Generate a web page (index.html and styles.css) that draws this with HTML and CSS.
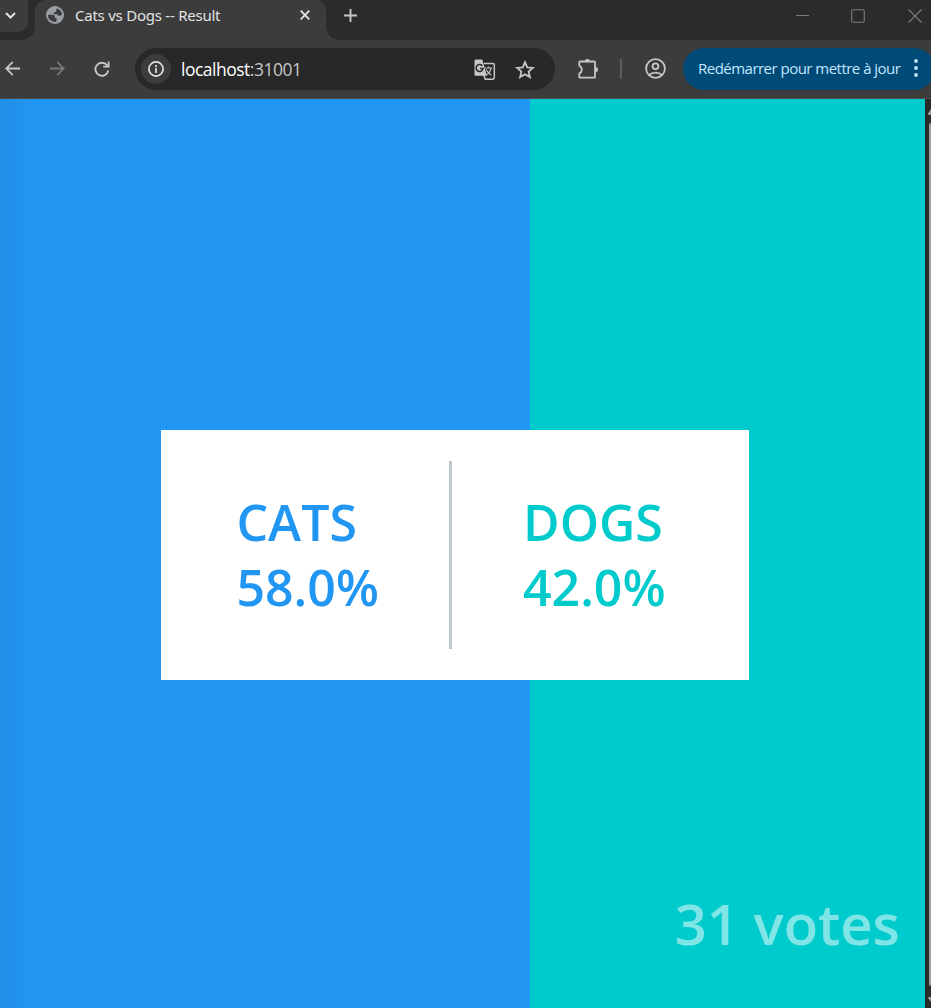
FILE: index.html
```html
<!DOCTYPE html>
<html lang="fr">
<head>
<meta charset="utf-8">
<title>Cats vs Dogs -- Result</title>
<link rel="stylesheet" href="styles.css">
</head>
<body>
<div class="window">
  <header class="titlebar">
    <div class="tab-search"><svg width="11" height="7" viewBox="0 0 11 7"><path d="M1 1l4.500 4.500L10 1" fill="none" stroke="#e3e3e3" stroke-width="2"/></svg></div>
    <div class="tab">
      <svg class="globe" width="18" height="18" viewBox="0 0 18 18"><circle cx="9" cy="9" r="9" fill="#9aa0a6"/><path d="M2 8.800h4.500c1.500 0 2.500.9 2.500 2.300v1h1.500v3.700C5.800 16.700 1.600 13 2 8.800zM10.900 2.400c2.700.7 4.700 2.800 5.100 5.700l-1.300 1.700h-2.300l-1.200-1.600H7.800V5.900h2.400V4.300z" fill="#3c3c3c"/></svg>
      <span class="tab-title">Cats vs Dogs -- Result</span>
      <svg class="tab-close" width="10" height="10" viewBox="0 0 10 10"><path d="M.7.7l8.600 8.600M9.300.7L.7 9.300" stroke="#e3e3e3" stroke-width="1.900"/></svg>
    </div>
    <svg class="new-tab" width="13" height="13" viewBox="0 0 13 13"><path d="M6.500 0v13M0 6.500h13" stroke="#c7c7c7" stroke-width="1.900"/></svg>
    <div class="controls">
      <svg width="13" height="14" viewBox="0 0 13 14"><path d="M0 6.500h13" stroke="#7d7d7d"/></svg>
      <svg width="14" height="14" viewBox="0 0 14 14"><rect x=".7" y=".7" width="12.600" height="12.600" rx="1.500" fill="none" stroke="#7d7d7d" stroke-width="1.100"/></svg>
      <svg width="14" height="14" viewBox="0 0 14 14"><path d="M.5.5l13 13M13.500.5l-13 13" stroke="#7d7d7d" stroke-width="1.100"/></svg>
    </div>
  </header>
  <nav class="toolbar">
    <svg class="back" width="15" height="15" viewBox="0 0 15 15"><path d="M15 7.500H1.500M7.800.9L1.200 7.500l6.600 6.600" fill="none" stroke="#c7c7c7" stroke-width="1.800"/></svg>
    <svg class="forward" width="15" height="15" viewBox="0 0 15 15"><path d="M0 7.500h13.500M7.200.9l6.600 6.600-6.600 6.600" fill="none" stroke="#777" stroke-width="1.800"/></svg>
    <svg class="reload" width="16" height="16" viewBox="0 0 16 16"><path d="M14.300 9.500A6.500 6.500 0 1 1 13 4.200l1 1.300" fill="none" stroke="#c7c7c7" stroke-width="1.900"/><path d="M15.500.4v6.200H9.200V4.800h4.500V.4z" fill="#c7c7c7"/></svg>
    <div class="address">
      <div class="site-info"><svg width="16" height="16" viewBox="0 0 16 16"><circle cx="8" cy="8" r="7.100" fill="none" stroke="#e3e3e3" stroke-width="1.700"/><path d="M8 7v5M8 4v2" stroke="#e3e3e3" stroke-width="1.700"/></svg></div>
      <span class="url">localhost<span class="port">:31001</span></span>
      <svg class="translate" width="22" height="22" viewBox="0 0 22 22"><path d="M10 4.600h8.700c.9 0 1.600.7 1.600 1.600v12.400c0 .9-.7 1.600-1.600 1.600h-7.500L9 14" fill="none" stroke="#c7c7c7" stroke-width="1.500"/><path d="M2 .5h6.300l4.500 16.300H2c-.9 0-1.500-.7-1.500-1.600V2C.5 1.100 1.100.5 2 .5z" fill="#c7c7c7"/><path d="M8.300 6.700A3.500 3.500 0 1 0 9.100 9.500H6.100" fill="none" stroke="#282828" stroke-width="1.500"/><path d="M10.700 9h7.500M14.400 7.500V9M12 10.500c1 2 2.700 4 5.200 5.500M17 9.300c-.7 3-2.500 5.300-5.200 7" fill="none" stroke="#c7c7c7" stroke-width="1.200"/></svg>
      <svg class="star" width="20" height="19" viewBox="0 0 20 19"><path d="M10 2.200l2.200 5.200 5.700.5-4.300 3.700 1.300 5.500-4.900-2.900-4.900 2.900 1.300-5.500-4.300-3.700 5.700-.5z" fill="none" stroke="#c7c7c7" stroke-width="1.800"/></svg>
    </div>
    <svg class="extension" width="22" height="22" viewBox="0 0 22 22"><path d="M3.100 3.500H17.400Q18 3.500 18 4.100V19Q18 19.700 17.400 19.700H3Q2.300 19.700 2.300 19V15.600Q4.800 14.400 4.800 11.700T2.300 7.800V4.200Q2.300 3.500 3.100 3.500Z" fill="none" stroke="#c7c7c7" stroke-width="1.800"/><path d="M7.700 3.500a2.600 2.600 0 0 1 5.200 0zM18.400 9a2.600 2.600 0 0 1 0 5.200z" fill="#c7c7c7"/></svg>
    <span class="separator"></span>
    <svg class="profile" width="21" height="21" viewBox="0 0 21 21"><g fill="none" stroke="#c7c7c7" stroke-width="1.800"><circle cx="10.500" cy="10.500" r="9.400"/><circle cx="10.500" cy="8.300" r="2.900"/><path d="M4 17c3.500-3.100 9.500-3.100 13 0"/></g></svg>
    <div class="update"><span>Redémarrer pour mettre à jour</span><svg width="4" height="18" viewBox="0 0 4 18" fill="#c2e7ff"><circle cx="2" cy="2" r="1.900"/><circle cx="2" cy="9" r="1.900"/><circle cx="2" cy="16" r="1.900"/></svg></div>
  </nav>
  <div class="viewport">
    <main class="page">
      <div class="side cats"></div>
      <div class="side dogs"><span class="votes">31 votes</span></div>
      <section class="results">
        <div class="choice cats-choice"><div class="label">CATS</div><div class="stat">58.0%</div></div>
        <div class="divider"></div>
        <div class="choice dogs-choice"><div class="label">DOGS</div><div class="stat">42.0%</div></div>
      </section>
    </main>
    <aside class="scrollbar">
      <svg width="6" height="20" viewBox="0 0 6 20"><path d="M3 14.500L6 10v6H4Q3 16 3 14.500z" fill="#9f9f9f"/></svg>
      <div class="thumb"></div>
      <svg width="6" height="22" viewBox="0 0 6 22"><path d="M3 12q0-1 1-1h2v5z" fill="#9f9f9f"/></svg>
    </aside>
  </div>
</div>
</body>
</html>
```

FILE: styles.css
```css
* { box-sizing: border-box; }
body { margin: 0; overflow: hidden; font-family: "Open Sans", "Noto Sans", sans-serif; }
svg { display: block; flex: none; }
.window { width: 931px; height: 1008px; display: flex; flex-direction: column; overflow: hidden; background: #3c3c3c; }

.titlebar { height: 40px; display: flex; align-items: flex-start; background: #2b2b2b; }
.tab-search { width: 28px; height: 32px; padding: 12px 0 0 5px; background: #3c3c3c; border-radius: 0 0 10px 0; }
.tab { position: relative; width: 291px; height: 40px; margin-left: 7px; padding: 0 16px 8px 11px; display: flex; align-items: center; background: #3c3c3c; border-radius: 10px 10px 0 0; }
.tab::before, .tab::after { content: ""; position: absolute; bottom: 0; width: 13px; height: 13px; }
.tab::before { left: -13px; background: radial-gradient(circle at 0 0, transparent 12.5px, #3c3c3c 13px); }
.tab::after { right: -13px; background: radial-gradient(circle at 100% 0, transparent 12.5px, #3c3c3c 13px); }
.globe { margin-top: -2px; }
.tab-title { margin: -3px 0 0 11px; font-family: "Noto Sans", sans-serif; font-size: 15px; line-height: 20px; letter-spacing: -0.24px; color: #e3e3e3; white-space: nowrap; }
.tab-close { margin: -2px 0 0 auto; }
.new-tab { margin: 9px 0 0 18px; }
.controls { display: flex; gap: 42.5px; margin: 9px 9.5px 0 auto; }

.toolbar { height: 59px; display: flex; align-items: center; padding: 0 0 1px 5px; background: #3c3c3c; border-bottom: 1px solid #4a4a4a; }
.forward { margin-left: 30px; }
.reload { margin-left: 29px; }
.address { width: 420px; height: 42px; flex: none; margin: 1px 0 0 25px; padding: 0 20px 0 6px; display: flex; align-items: center; background: #282828; border-radius: 21px; }
.site-info { width: 30px; height: 30px; display: flex; align-items: center; justify-content: center; background: #3c3c3c; border-radius: 50%; }
.url { margin-left: 10px; font-size: 17.5px; line-height: 24px; letter-spacing: -0.5px; color: #fff; }
.port { color: #c7c7c7; }
.translate { margin: 1px 19px 0 auto; }
.extension { margin-left: 22px; }
.separator { width: 2px; height: 20px; flex: none; margin-left: 21px; background: #5e5e5e; }
.profile { margin-left: 23px; }
.update { width: 252px; height: 42px; flex: none; margin-left: 17px; padding: 0 0 1px 15px; display: flex; align-items: center; background: #004a77; color: #c2e7ff; border-radius: 21px; font-size: 15px; letter-spacing: -0.52px; white-space: nowrap; }
.update span { width: 216px; }

.viewport { flex: 1; display: flex; }
.page { position: relative; width: 925px; display: flex; }
.side { height: 100%; }
.cats { width: 530px; background: linear-gradient(90deg, #208ee6 0, #2196f3 32px); }
.dogs { width: 395px; background: #00cbcc; display: flex; align-items: flex-end; justify-content: flex-end; padding: 0 25px 47px 0; }
.votes { font-size: 56.25px; font-weight: 600; line-height: 76px; color: rgba(255, 255, 255, .5); white-space: nowrap; }
.results { position: absolute; left: 161.4px; top: 331px; width: 587.2px; height: 250px; padding: 31px 0; display: flex; background: #fff; }
.choice { font-size: 50px; font-weight: 600; line-height: 65px; padding-top: 29px; white-space: nowrap; }
.cats-choice { width: 287.600px; padding-left: 75px; color: #2196f3; }
.dogs-choice { padding-left: 71px; color: #00cbcc; }
.divider { width: 3px; background: #c0c9ce; }
.scrollbar { width: 6px; display: flex; flex-direction: column; background: #2b2b2b; }
.thumb { flex: 1; margin: 4px 0 0 4px; background: #9f9f9f; border-radius: 3px 0 0 3px; }
```
